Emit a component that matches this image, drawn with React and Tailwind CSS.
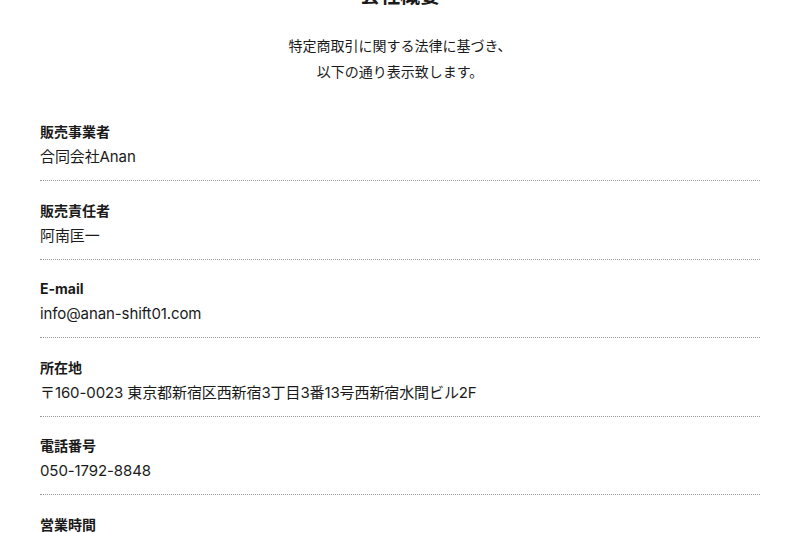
export default function App() {
  const items = [
    ["販売事業者", "合同会社Anan"],
    ["販売責任者", "阿南匡一"],
    ["E-mail", "info@anan-shift01.com"],
    ["所在地", "〒160-0023 東京都新宿区西新宿3丁目3番13号西新宿水間ビル2F"],
    ["電話番号", "050-1792-8848"],
    ["営業時間", "10:00〜19:00"],
  ];
  return (
    <div
      className="w-[800px] h-[533px] overflow-hidden bg-white text-[#1a1a1a]"
      style={{ fontFamily: 'Inter, "Noto Sans CJK JP", sans-serif' }}
    >
      <div className="mt-[-19px] h-[30px] text-center text-[20px] leading-[30px] font-bold">会社概要</div>
      <div className="mt-[22px] text-center text-[14px] leading-[25.5px]">
        <p>特定商取引に関する法律に基づき、</p>
        <p>以下の通り表示致します。</p>
      </div>
      <div className="mx-10 mt-[18.5px]">
        {items.map(([k, v]) => (
          <div key={k} className="pt-[16.5px] pb-[10px] border-b border-dotted border-[#999]">
            <div className="text-[14px] leading-[25px] font-bold">{k}</div>
            <div className="text-[15px] leading-[26px] tracking-[-0.1px]">{v}</div>
          </div>
        ))}
      </div>
    </div>
  );
}
